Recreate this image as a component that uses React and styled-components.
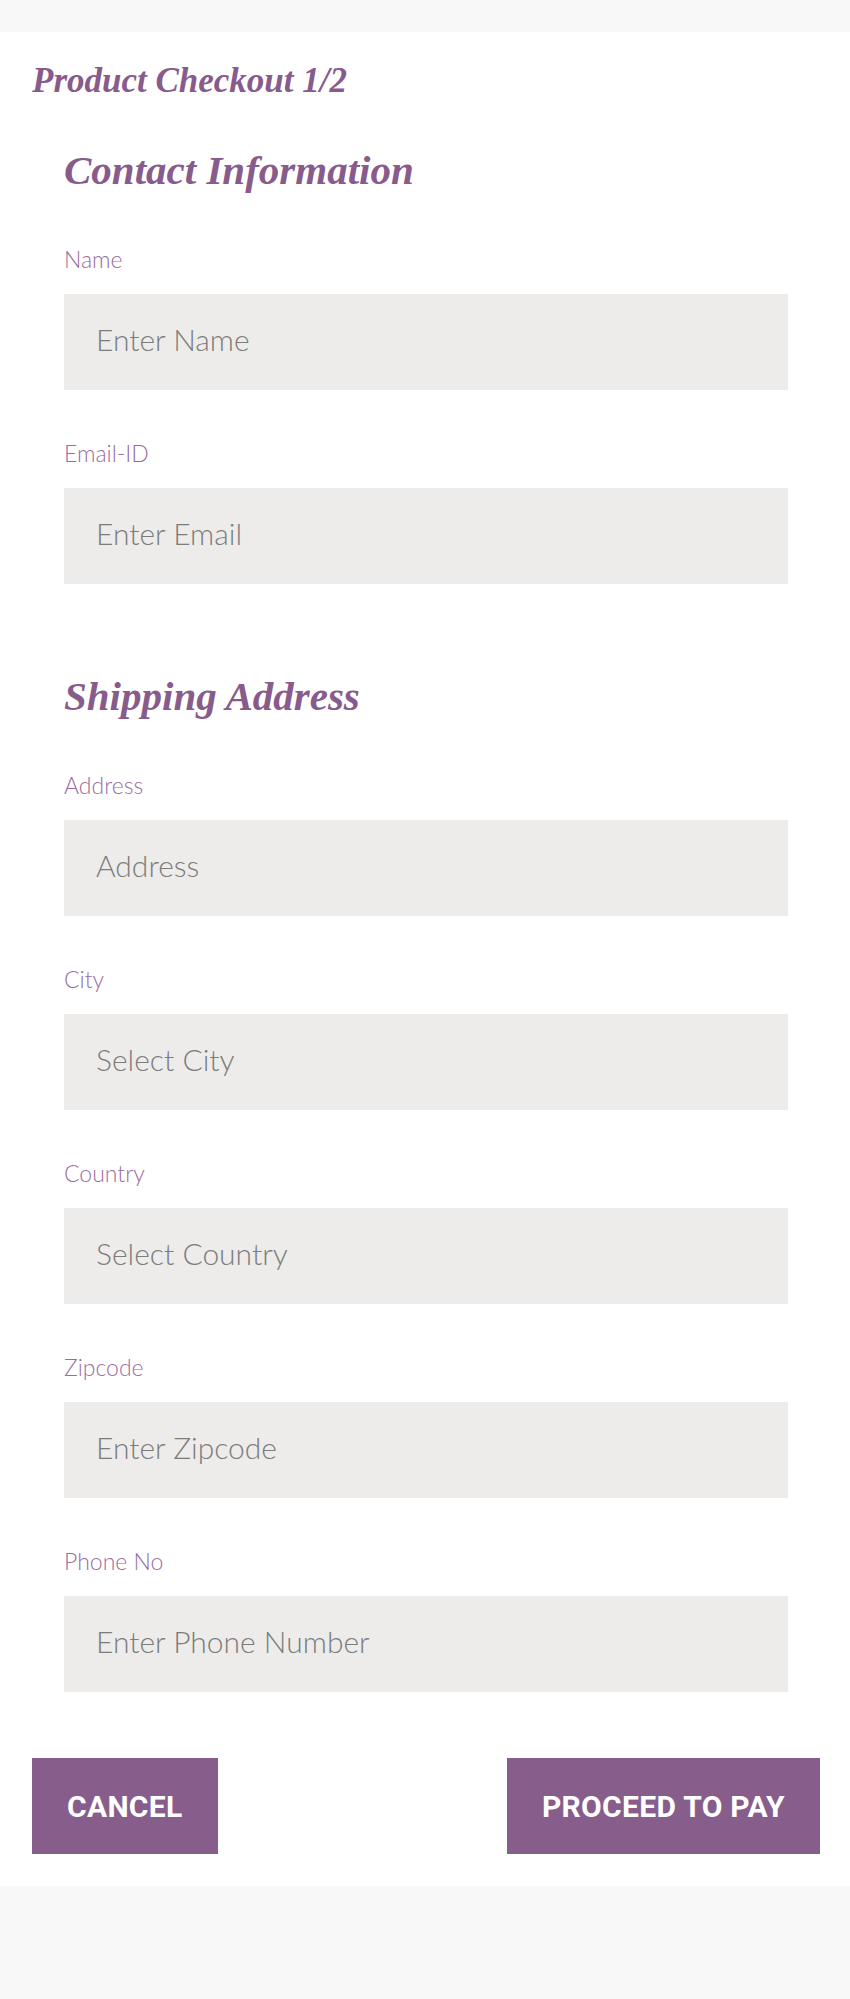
import React from "react";
import styled, { createGlobalStyle } from "styled-components";

const GlobalStyle = createGlobalStyle`
  html, body {
    margin: 0;
    padding: 0;
    background: #f8f8f8;
  }
  * { box-sizing: border-box; }
`;

const Page = styled.div`
  background: #f8f8f8;
  padding-top: 32px;
  min-height: 1999px;
`;

const Card = styled.main`
  background: #ffffff;
  padding: 29px 30px 32px 32px;
`;

const PageTitle = styled.h1`
  margin: 0;
  font-family: "Liberation Serif", "Times New Roman", serif;
  font-style: italic;
  font-weight: 700;
  font-size: 35px;
  line-height: 40px;
  color: #875b8c;
`;

const Form = styled.form`
  margin: 0 32px;
  display: flex;
  flex-direction: column;
`;

const Section = styled.section`
  display: flex;
  flex-direction: column;
  gap: 49px;
  margin-top: ${(p) => p.$top}px;
`;

const SectionTitle = styled.h2`
  margin: 0 0 2px;
  font-family: "Liberation Serif", "Times New Roman", serif;
  font-style: italic;
  font-weight: 700;
  font-size: 41px;
  line-height: 48px;
  color: #875b8c;
`;

const Field = styled.label`
  display: flex;
  flex-direction: column;
  gap: 21px;
`;

const Label = styled.span`
  font-family: Lato, "Open Sans", sans-serif;
  font-weight: 300;
  font-size: 23px;
  line-height: 28px;
  color: #9a6d9e;
`;

const Input = styled.input`
  display: block;
  width: 100%;
  height: 96px;
  border: none;
  outline: none;
  background: #edecea;
  padding: 0 32px 7px;
  font-family: Lato, "Open Sans", sans-serif;
  font-weight: 300;
  font-size: 30px;
  color: #555;
  &::placeholder {
    color: #7c7c7c;
    opacity: 1;
  }
`;

const Actions = styled.div`
  display: flex;
  justify-content: space-between;
  margin-top: 66px;
`;

const Button = styled.button`
  height: 96px;
  padding: 0 35px;
  border: none;
  background: #875d8c;
  color: #ffffff;
  font-family: Roboto, "Liberation Sans", sans-serif;
  font-weight: 700;
  font-size: 30px;
  letter-spacing: 0.3px;
  text-transform: uppercase;
  cursor: pointer;
`;

const contactFields = [
  { label: "Name", placeholder: "Enter Name", type: "text" },
  { label: "Email-ID", placeholder: "Enter Email", type: "email" },
];

const shippingFields = [
  { label: "Address", placeholder: "Address", type: "text" },
  { label: "City", placeholder: "Select City", type: "text" },
  { label: "Country", placeholder: "Select Country", type: "text" },
  { label: "Zipcode", placeholder: "Enter Zipcode", type: "text" },
  { label: "Phone No", placeholder: "Enter Phone Number", type: "tel" },
];

function FormField({ label, placeholder, type }) {
  return (
    <Field>
      <Label>{label}</Label>
      <Input type={type} placeholder={placeholder} />
    </Field>
  );
}

export default function App() {
  return (
    <>
      <GlobalStyle />
      <Page>
        <Card>
          <PageTitle>Product Checkout 1/2</PageTitle>
          <Form onSubmit={(e) => e.preventDefault()}>
            <Section $top={45}>
              <SectionTitle>Contact Information</SectionTitle>
              {contactFields.map((f) => (
                <FormField key={f.label} {...f} />
              ))}
            </Section>
            <Section $top={88}>
              <SectionTitle>Shipping Address</SectionTitle>
              {shippingFields.map((f) => (
                <FormField key={f.label} {...f} />
              ))}
            </Section>
          </Form>
          <Actions>
            <Button type="button">Cancel</Button>
            <Button type="submit">Proceed to Pay</Button>
          </Actions>
        </Card>
      </Page>
    </>
  );
}
